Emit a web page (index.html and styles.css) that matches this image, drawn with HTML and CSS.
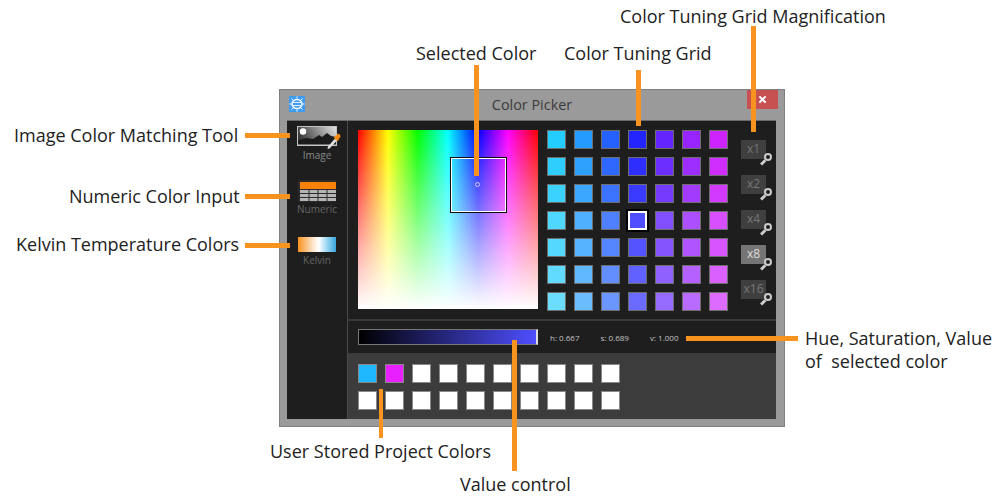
FILE: index.html
```html
<!DOCTYPE html>
<html>
	<head>
		<title>Color Picker</title>
		<link rel="stylesheet" href="styles.css">
	</head>
	<body>
		<div class="stage">
			<!-- callouts -->
			<div class="label" style="left: 14px; top: 124px">Image Color Matching Tool</div>
			<div class="label" style="left: 69px; top: 185px">Numeric Color Input</div>
			<div class="label" style="left: 16px; top: 233px">Kelvin Temperature Colors</div>
			<div class="label" style="left: 416px; top: 42px">Selected Color</div>
			<div class="label" style="left: 564px; top: 42px">Color Tuning Grid</div>
			<div class="label" style="left: 620px; top: 5px">Color Tuning Grid Magnification</div>
			<div class="label" style="left: 805px; top: 327px">Hue, Saturation, Value<br>of&nbsp; selected color</div>
			<div class="label" style="left: 270px; top: 440px">User Stored Project Colors</div>
			<div class="label" style="left: 460px; top: 473px">Value control</div>

			<div class="window">
				<div class="titlebar">
					<svg class="app-icon" viewBox="0 0 16 16" width="16" height="16">
						<rect width="16" height="16" fill="#3f9cf0"/>
						<ellipse cx="8" cy="8" rx="5" ry="4.5" fill="#3f9cf0" stroke="#fff" stroke-width="1.4"/>
						<path d="M3 6.5h10M3 9.5h10" stroke="#e6f3ff" stroke-width="1.1"/>
						<path d="M8 .5v2M8 13.5v2M.5 8h2M13.5 8h2M2.5 2.5l1.5 1.5M12 12l1.5 1.5M13.5 2.5L12 4M4 12l-1.5 1.5" stroke="#fff" stroke-width="1"/>
					</svg>
					<div class="title">Color Picker</div>
					<div class="close">
						<svg viewBox="0 0 10 10" width="9" height="9"><path d="M1.5 1.5l7 7M8.5 1.5l-7 7" stroke="#fff" stroke-width="2.2"/></svg>
					</div>
				</div>
				<div class="panel">
					<div class="sidebar">
						<div class="tool tool-image">
							<svg viewBox="0 0 46 24" width="46" height="24">
								<defs>
									<linearGradient id="sky" x1="0" x2="1" y1="0.3" y2="0">
										<stop offset="0" stop-color="#3c3c3c"/>
										<stop offset="1" stop-color="#e4e4e4"/>
									</linearGradient>
								</defs>
								<rect x="0.5" y="0.5" width="39" height="19" fill="url(#sky)" stroke="#c4c4c4"/>
								<circle cx="6" cy="5.5" r="3.2" fill="#fff"/>
								<path d="M1 14l9-2 6 1 6-4 3 2 5-4 4 3 5 1v8H1z" fill="#1c1c1c"/>
								<path d="M1 19h38" stroke="#c4c4c4"/>
								<path d="M31 20.5l7-8 2 2-7.500 8-2 .5z" fill="#e0e0e0"/>
								<path d="M38 10l2-1 .5-1.500 2.500 1 .5 2.500-1.500 1.500-.5 2-1.500.5-3-3z" fill="#f78a12"/>
							</svg>
							<span>Image</span>
						</div>
						<div class="tool tool-numeric">
							<svg viewBox="0 0 38 22" width="38" height="22">
								<rect width="38" height="22" fill="#2a2a2a"/>
								<rect x="2" y="2" width="36" height="7" fill="#f7820a"/>
								<path d="M2 10h8.500v3H2zM11.500 10h8v3h-8zM20.500 10h8v3h-8zM29.500 10h8.500v3h-8.500zM2 14h8.500v3H2zM11.500 14h8v3h-8zM20.500 14h8v3h-8zM29.500 14h8.500v3h-8.500zM2 18h8.500v3H2zM11.500 18h8v3h-8zM20.500 18h8v3h-8zM29.500 18h8.500v3h-8.500z" fill="#b5b5b5"/>
							</svg>
							<span>Numeric</span>
						</div>
						<div class="tool tool-kelvin">
							<div class="kelvin-bar"></div>
							<span>Kelvin</span>
						</div>
					</div>
					<div class="main">
						<div class="top">
							<div class="spectrum">
								<div class="lens"></div>
								<div class="dot"></div>
							</div>
							<div class="grid" id="grid"></div>
							<div class="mags">
								<div class="mag">x1</div>
								<div class="mag">x2</div>
								<div class="mag">x4</div>
								<div class="mag on">x8</div>
								<div class="mag">x16</div>
							</div>
						</div>
						<div class="value-row">
							<div class="value-bar"></div>
							<div class="hsv">
								<span>h: 0.667</span>
								<span>s: 0.689</span>
								<span>v: 1.000</span>
							</div>
						</div>
						<div class="stored">
							<div class="cell" style="background: #1fb8ff"></div>
							<div class="cell" style="background: #e81fff"></div>
							<div class="cell"></div><div class="cell"></div><div class="cell"></div><div class="cell"></div><div class="cell"></div><div class="cell"></div><div class="cell"></div><div class="cell"></div>
							<div class="cell"></div><div class="cell"></div><div class="cell"></div><div class="cell"></div><div class="cell"></div><div class="cell"></div><div class="cell"></div><div class="cell"></div><div class="cell"></div><div class="cell"></div>
						</div>
					</div>
				</div>
			</div>

			<div class="line" style="left: 245px; top: 133px; width: 45px; height: 5px"></div>
			<div class="line" style="left: 245px; top: 194px; width: 45px; height: 5px"></div>
			<div class="line" style="left: 245px; top: 243px; width: 45px; height: 5px"></div>
			<div class="line" style="left: 474px; top: 65px; width: 5px; height: 111px"></div>
			<div class="line" style="left: 636px; top: 70px; width: 5px; height: 56px"></div>
			<div class="line" style="left: 751px; top: 26px; width: 5px; height: 106px"></div>
			<div class="line" style="left: 686px; top: 336px; width: 112px; height: 5px"></div>
			<div class="line" style="left: 512px; top: 340px; width: 5px; height: 131px"></div>
			<div class="line" style="left: 379px; top: 389px; width: 4px; height: 49px"></div>
		</div>
		<script src="script.js"></script>
	</body>
</html>
```

FILE: styles.css
```css
body {
	margin: 0;
	background: #fff;
	font-family: "Open Sans", sans-serif;
}

.stage {
	position: relative;
	width: 1007px;
	height: 499px;
	overflow: hidden;
}

.label {
	position: absolute;
	font-size: 18px;
	line-height: 23px;
	color: #222;
	white-space: nowrap;
}

.line {
	position: absolute;
	background: #f7931e;
}

.window {
	position: absolute;
	left: 279px;
	top: 89px;
	width: 506px;
	height: 338px;
	box-sizing: border-box;
	background: #9a9a9a;
	border: 1px solid #808080;
	display: flex;
	flex-direction: column;
}

.titlebar {
	height: 30px;
	display: flex;
	padding-left: 9px;
}
.app-icon {
	margin-top: 6px;
}
.title {
	flex-grow: 1;
	text-align: center;
	font-size: 14.4px;
	line-height: 30px;
	color: #3a3a3a;
	padding-left: 12px;
}
.close {
	width: 31px;
	height: 19px;
	margin-right: 6px;
	background: #c75050;
	display: flex;
	align-items: center;
	justify-content: center;
}

.panel {
	flex-grow: 1;
	margin: 0 8px 7px 7px;
	display: flex;
	background: #1e1e1e;
	border-top: 1px solid #6a6a6a;
}

.sidebar {
	width: 61px;
	box-sizing: border-box;
	border-right: 1px solid #4a4a4a;
	display: flex;
	flex-direction: column;
	align-items: center;
	font-size: 10px;
	color: #8a8a8a;
}
.tool {
	display: flex;
	flex-direction: column;
	align-items: center;
}
.tool span {
	line-height: 13px;
}
.tool-image {
	padding: 5px 0 0 6px;
	height: 54px;
}
.tool-image span {
	margin: -1px 6px 0 0;
}
.tool-numeric {
	height: 57px;
}
.tool-numeric span {
	color: #666;
	margin-top: 1px;
}
.kelvin-bar {
	width: 38px;
	height: 15px;
	background: linear-gradient(to right, #f7931e, #fde6cf 40%, #fff 55%, #9fd8f2 75%, #3aa6dc);
}
.tool-kelvin span {
	color: #666;
	margin-top: 2px;
}

.main {
	flex-grow: 1;
	display: flex;
	flex-direction: column;
}

.top {
	height: 200px;
	padding: 9px 0 0 10px;
	box-sizing: border-box;
	display: flex;
	border-bottom: 2px solid #3a3a3a;
}

.spectrum {
	position: relative;
	width: 180px;
	height: 179px;
	background:
		linear-gradient(to bottom, rgba(255, 255, 255, 0), #fff),
		linear-gradient(to right, #f00, #ff0 16.66%, #0f0 33.33%, #0ff 50%, #00f 66.66%, #f0f 83.33%, #f00);
}
.lens {
	position: absolute;
	left: 93px;
	top: 28px;
	width: 53px;
	height: 52px;
	border: 1px solid #fff;
	outline: 1px solid #111;
}
.dot {
	position: absolute;
	left: 117px;
	top: 52px;
	width: 3px;
	height: 3px;
	border-radius: 50%;
	background: #4f4fff;
	border: 1px solid #cfd0ff;
}

.grid {
	margin-left: 9px;
	display: grid;
	grid-template-columns: repeat(7, 19px);
	grid-auto-rows: 19px;
	gap: 8px;
}
.swatch {
	box-sizing: border-box;
	border: 1px solid #6e6e6e;
}
.swatch.selected {
	border: 2px solid #fff;
	box-shadow: 0 0 0 2px #000;
}

.mags {
	margin: 10px 0 0 13px;
	display: flex;
	flex-direction: column;
	gap: 16px;
}
.mag {
	position: relative;
	width: 25px;
	height: 19px;
	background: #3f3f3f;
	color: #777;
	font-size: 12px;
	line-height: 17px;
	text-align: center;
}
.mag.on {
	background: #757575;
	color: #ddd;
}
.mag::after {
	content: "";
	position: absolute;
	right: -6px;
	bottom: -2px;
	width: 8px;
	height: 8px;
	box-sizing: border-box;
	border: 2px solid #ccc;
	border-radius: 50%;
	background: #1e1e1e;
}
.mag::before {
	content: "";
	position: absolute;
	right: 0;
	bottom: -4px;
	width: 6px;
	height: 2.500px;
	background: #ccc;
	transform: rotate(-45deg);
}

.value-row {
	height: 33px;
	padding-left: 10px;
	display: flex;
	align-items: center;
	box-sizing: border-box;
	border-bottom: 1px solid #3a3a3a;
}
.value-bar {
	width: 180px;
	height: 16px;
	box-sizing: border-box;
	border: 1px solid #777;
	border-right: 2px solid #ddd;
	background: linear-gradient(to right, #000, #4f4fff);
}
.hsv {
	margin-left: 12px;
	display: flex;
	gap: 21px;
	font-size: 8px;
	color: #c4c4c4;
	white-space: nowrap;
}

.stored {
	flex-grow: 1;
	background: #3c3c3c;
	padding: 10px 0 0 10px;
	display: grid;
	grid-template-columns: repeat(10, 19px);
	grid-auto-rows: 19px;
	gap: 8px;
	align-content: start;
}
.cell {
	box-sizing: border-box;
	background: #fff;
	border: 1px solid #888;
}
```

FILE: script.js
```js
var grid = document.getElementById("grid");
var hues = [0.538, 0.575, 0.62, 0.667, 0.715, 0.755, 0.795];
var sats = [0.86, 0.82, 0.77, 0.689, 0.67, 0.62, 0.58];

function rgb(h, s) {
	var i = Math.floor(h * 6);
	var f = h * 6 - i;
	var p = Math.round(255 * (1 - s));
	var q = Math.round(255 * (1 - s * f));
	var t = Math.round(255 * (1 - s * (1 - f)));
	var c = [[255, t, p], [q, 255, p], [p, 255, t], [p, q, 255], [t, p, 255], [255, p, q]][i % 6];
	return `rgb(${c[0]}, ${c[1]}, ${c[2]})`;
}

sats.forEach(function (s, row) {
	hues.forEach(function (h, col) {
		var item = document.createElement("div");
		item.className = "swatch";
		if (row == 3 && col == 3) item.className += " selected";
		item.style.background = rgb(h, s);
		grid.appendChild(item);
	});
});
```
